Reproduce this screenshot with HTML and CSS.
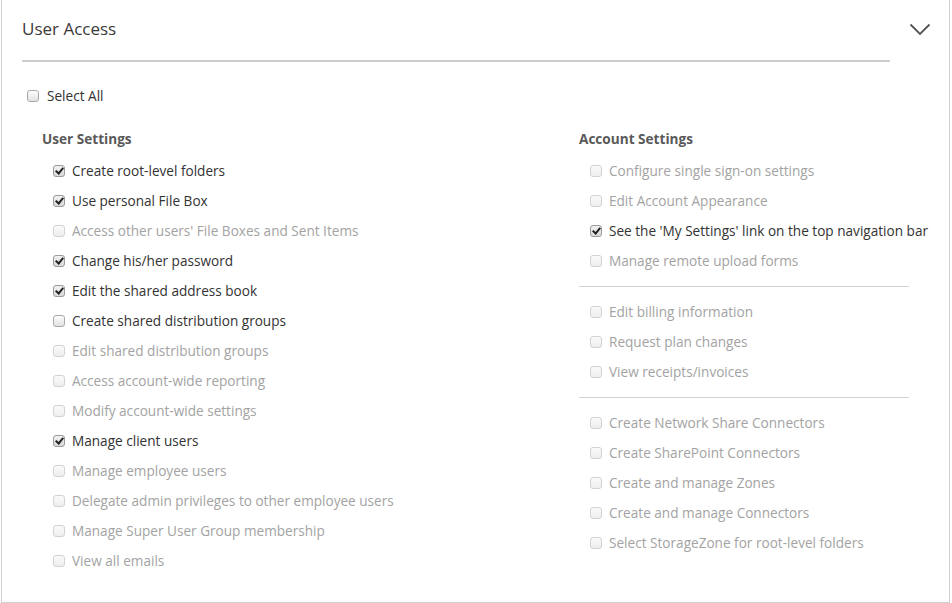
FILE: index.html
```html
<!DOCTYPE html>
<html>
<head>
<meta charset="utf-8">
<link rel="stylesheet" href="styles.css">
</head>
<body>
<div class="panel">
  <div class="head">
    <div class="title">User Access</div>
    <svg class="chev" width="22" height="13" viewBox="0 0 22 13"><path d="M1.5 1.5 L11 11 L20.5 1.5" fill="none" stroke="#555" stroke-width="1.8"/></svg>
  </div>
  <div class="row selall"><span class="cb"></span><span class="lbl">Select All</span></div>
  <div class="cols">
    <div class="col">
      <div class="colhead">User Settings</div>
      <div class="list">
        <div class="row"><span class="cb on"></span><span class="lbl">Create root-level folders</span></div>
        <div class="row"><span class="cb on"></span><span class="lbl">Use personal File Box</span></div>
        <div class="row dis"><span class="cb"></span><span class="lbl">Access other users' File Boxes and Sent Items</span></div>
        <div class="row"><span class="cb on"></span><span class="lbl">Change his/her password</span></div>
        <div class="row"><span class="cb on"></span><span class="lbl">Edit the shared address book</span></div>
        <div class="row"><span class="cb"></span><span class="lbl">Create shared distribution groups</span></div>
        <div class="row dis"><span class="cb"></span><span class="lbl">Edit shared distribution groups</span></div>
        <div class="row dis"><span class="cb"></span><span class="lbl">Access account-wide reporting</span></div>
        <div class="row dis"><span class="cb"></span><span class="lbl">Modify account-wide settings</span></div>
        <div class="row"><span class="cb on"></span><span class="lbl">Manage client users</span></div>
        <div class="row dis"><span class="cb"></span><span class="lbl">Manage employee users</span></div>
        <div class="row dis"><span class="cb"></span><span class="lbl">Delegate admin privileges to other employee users</span></div>
        <div class="row dis"><span class="cb"></span><span class="lbl">Manage Super User Group membership</span></div>
        <div class="row dis"><span class="cb"></span><span class="lbl">View all emails</span></div>
      </div>
    </div>
    <div class="col right">
      <div class="colhead">Account Settings</div>
      <div class="list">
        <div class="row dis"><span class="cb"></span><span class="lbl">Configure single sign-on settings</span></div>
        <div class="row dis"><span class="cb"></span><span class="lbl">Edit Account Appearance</span></div>
        <div class="row"><span class="cb on"></span><span class="lbl">See the 'My Settings' link on the top navigation bar</span></div>
        <div class="row dis"><span class="cb"></span><span class="lbl">Manage remote upload forms</span></div>
        <div class="divider"></div>
        <div class="row dis"><span class="cb"></span><span class="lbl">Edit billing information</span></div>
        <div class="row dis"><span class="cb"></span><span class="lbl">Request plan changes</span></div>
        <div class="row dis"><span class="cb"></span><span class="lbl">View receipts/invoices</span></div>
        <div class="divider"></div>
        <div class="row dis"><span class="cb"></span><span class="lbl">Create Network Share Connectors</span></div>
        <div class="row dis"><span class="cb"></span><span class="lbl">Create SharePoint Connectors</span></div>
        <div class="row dis"><span class="cb"></span><span class="lbl">Create and manage Zones</span></div>
        <div class="row dis"><span class="cb"></span><span class="lbl">Create and manage Connectors</span></div>
        <div class="row dis"><span class="cb"></span><span class="lbl">Select StorageZone for root-level folders</span></div>
      </div>
    </div>
  </div>
</div>
</body>
</html>
```
FILE: styles.css
```css
html, body {
  margin: 0;
  padding: 0;
  background: #fff;
}
body {
  font-family: "Open Sans", "Liberation Sans", sans-serif;
  font-size: 13.6px;
  color: #333;
}
.panel {
  box-sizing: border-box;
  margin-left: 1px;
  width: 949px;
  height: 603px;
  border: 1px solid #cfcfcf;
  border-top: none;
  padding-left: 20px;
  overflow: hidden;
}
.head {
  display: flex;
  align-items: flex-start;
}
.title {
  flex: 0 0 868px;
  box-sizing: border-box;
  font-size: 17px;
  line-height: 24px;
  padding-top: 17px;
  padding-bottom: 19px;
  border-bottom: 2px solid #cccccc;
  color: #3a3a3a;
}
.chev {
  margin-left: 19px;
  margin-top: 23px;
}
.row {
  display: flex;
  align-items: center;
  height: 30px;
  line-height: 30px;
  white-space: nowrap;
}
.selall {
  margin-top: 19px;
  padding-left: 5px;
}
.selall .cb {
  margin-right: 8px;
}
.cols {
  display: grid;
  grid-template-columns: 537px 330px;
  padding-left: 20px;
  margin-top: 13px;
}
.colhead {
  height: 30px;
  line-height: 30px;
  font-weight: bold;
  color: #595959;
}
.list {
  margin-top: 2px;
  padding-left: 11px;
}
.right .list {
  padding-left: 0;
}
.right .row {
  padding-left: 11px;
}
.cb {
  box-sizing: border-box;
  flex: 0 0 12px;
  width: 12px;
  height: 12px;
  margin-right: 7px;
  border: 1px solid #a9a9a9;
  border-radius: 3px;
  background: linear-gradient(#fdfdfd, #e2e2e2);
  position: relative;
}
.cb.on {
  background: linear-gradient(#f2f2f2, #d9d9d9);
  border-color: #9a9a9a;
}
.cb.on::after {
  content: "";
  position: absolute;
  left: 2.5px;
  top: 0px;
  width: 3px;
  height: 6px;
  border: solid #222;
  border-width: 0 2px 2px 0;
  transform: rotate(40deg);
}
.dis {
  color: #a3a3a3;
}
.dis .cb {
  border-color: #d2d2d2;
  background: linear-gradient(#fafafa, #eeeeee);
}
.divider {
  height: 1px;
  background: #d0d0d0;
  margin: 10px 0;
}
```
